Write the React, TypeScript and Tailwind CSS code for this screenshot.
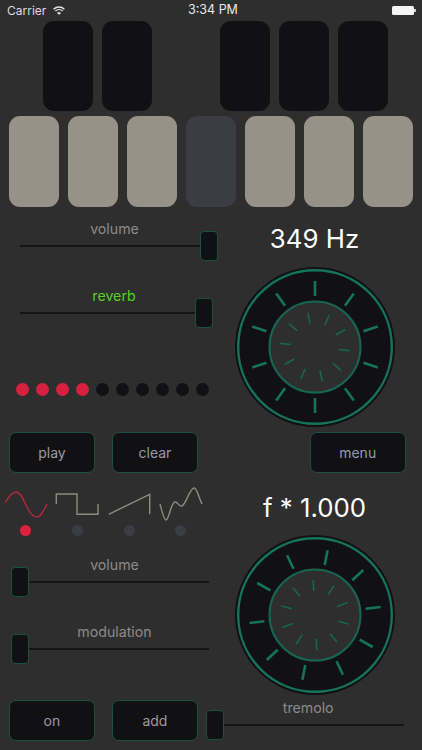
import React from "react";

const font = { fontFamily: "Inter, 'Liberation Sans', sans-serif" };

const Slider = ({ label, width, labelWidth, thumbAt, labelClass = "text-[#8b8b8b]" }: { label: string; width: string; labelWidth: string; thumbAt: "start" | "end"; labelClass?: string }) => (
  <div className={`relative flex items-center h-[30px] ${width}`}>
    {thumbAt === "start" && <Thumb />}
    <div className="flex-1 h-[2px] bg-[#151417]" />
    {thumbAt === "end" && <Thumb />}
    <div className={`absolute left-0 top-[-11px] text-center text-[14.2px] leading-[18px] ${labelWidth} ${labelClass}`}>{label}</div>
  </div>
);

const Thumb = () => (
  <div className="w-[18px] h-[30px] shrink-0 rounded-[4px] bg-[#111013] border border-[#1e5040]" />
);

const Btn = ({ label, className = "w-[86.5px]" }: { label: string; className?: string }) => (
  <div className={`h-[41px] flex items-center justify-center rounded-[7px] bg-[#111013] border-[1.5px] border-[#1e5040] text-[14px] text-[#9a9aaa] ${className}`}>
    {label}
  </div>
);

const Ticks = ({ rotate, from, to, width, color }: { rotate: number; from: number; to: number; width: number; color: string }) => (
  <>
    {Array.from({ length: 10 }).map((_, i) => (
      <line key={i} x1="80" y1={80 - from} x2="80" y2={80 - to} stroke={color} strokeWidth={width} transform={`rotate(${rotate + i * 36} 80 80)`} />
    ))}
  </>
);

const Knob = ({ outerRot, innerRot }: { outerRot: number; innerRot: number }) => (
  <svg width="160" height="160" viewBox="0 0 160 160" className="block">
    <circle cx="80" cy="80" r="80" fill="#111013" />
    <circle cx="80" cy="80" r="76.8" fill="none" stroke="#14755a" strokeWidth="2.4" />
    <Ticks rotate={outerRot} from={51} to={66} width={2.6} color="#14755a" />
    <circle cx="80" cy="80" r="45.5" fill="#2e2e2e" stroke="#176650" strokeWidth="2" />
    <Ticks rotate={innerRot} from={24} to={35} width={1.6} color="#176650" />
  </svg>
);

const waves = [
  { d: "M5 17C9 10 12 6 16 6C24 6 27 31 37 31C41 31 44 24 47 18", color: "#b0283f", dot: "bg-[#e0203f]" },
  { d: "M5.3 18V8H26V28.3H47V18", color: "#8e8b82", dot: "bg-[#3c3c44]" },
  { d: "M5.7 28.3L46.7 8.3V28.3", color: "#8e8b82", dot: "bg-[#3c3c44]" },
  { d: "M5 18C7 26 9 34 11 34C14 34 16 16 20 16C23 16 24 21 27 20C31 18 35 2 39 2C42 2 44 12 47 18", color: "#8e8b82", dot: "bg-[#3c3c44]" },
];

const dotColors = ["r", "r", "r", "r", "b", "b", "b", "b", "b", "b"];

export default function App() {
  return (
    <div className="w-[422px] h-[750px] overflow-hidden bg-[#2e2e2e]" style={font}>
      {/* status bar */}
      <div className="relative h-[21px] flex items-center pl-[7px] pr-[6px] text-[12px] text-[#dcdcdc]">
        <span>Carrier</span>
        <svg width="12" height="9" viewBox="0 0 12 9" className="ml-[6.5px]" fill="none" stroke="#e4e4e4">
          <path d="M.6 3.2C3.6.3 8.4.3 11.4 3.2" strokeWidth="1.4" />
          <path d="M2.4 5C4.4 3.1 7.6 3.1 9.6 5" strokeWidth="1.4" />
          <path d="M4.3 6.9C5.2 6 6.8 6 7.7 6.9L6 8.6Z" fill="#e4e4e4" strokeWidth=".5" />
        </svg>
        <span className="absolute left-[188px] text-[12.5px] text-[#e8e8e8]">3:34 PM</span>
        <div className="ml-auto flex items-center">
          <div className="w-[22px] h-[9px] bg-[#f4f4f4] rounded-[1.5px]" />
          <div className="w-[2px] h-[3px] bg-[#d0d0d0]" />
        </div>
      </div>

      {/* keys */}
      <div className="flex pl-[42.6px] h-[90px] gap-[8.5px]">
        {[0, 1].map((k) => <div key={k} className="w-[50.5px] rounded-[11px] bg-[#111013]" />)}
        <div className="w-[50.5px]" />
        {[2, 3, 4].map((k) => <div key={k} className="w-[50.5px] rounded-[11px] bg-[#111013]" />)}
      </div>
      <div className="flex pl-[8.6px] h-[91px] mt-[5px] gap-[8.5px]">
        {[0, 1, 2, 3, 4, 5, 6].map((k) => (
          <div key={k} className={`w-[50.5px] rounded-[11px] ${k === 3 ? "bg-[#3c3c44]" : "bg-[#969287]"}`} />
        ))}
      </div>

      {/* top controls */}
      <div className="flex h-[225px]">
        <div className="w-[234.5px] pl-[20px] pt-[24px]">
          <Slider label="volume" width="w-[198px]" labelWidth="w-[189px]" thumbAt="end" />
          <div className="mt-[37px]">
            <Slider label="reverb" width="w-[193px]" labelWidth="w-[188px]" thumbAt="end" labelClass="text-[#4fd61f]" />
          </div>
          <div className="mt-[55px] -ml-[4px] flex gap-[7px]">
            {dotColors.map((c, i) => (
              <div key={i} className={`w-[13px] h-[13px] rounded-full ${c === "r" ? "bg-[#d9213f]" : "bg-[#111013]"}`} />
            ))}
          </div>
        </div>
        <div className="w-[160px] flex flex-col items-center">
          <div className="h-[60px] pt-[14px] text-[25.8px] leading-[36px] text-white">349 Hz</div>
          <Knob outerRot={0} innerRot={-12} />
        </div>
      </div>

      {/* buttons */}
      <div className="flex pl-[8.7px] h-[40px]">
        <Btn label="play" />
        <Btn label="clear" className="w-[86.5px] ml-[16.5px]" />
        <Btn label="menu" className="w-[96px] ml-[111.5px]" />
      </div>

      {/* lower controls */}
      <div className="flex h-[228px]">
        <div className="w-[234.5px]">
          <div className="flex pt-[14px]">
            {waves.map((w, i) => (
              <div key={i} className="w-[51.67px] flex flex-col items-center">
                <svg width="52" height="36" viewBox="0 0 52 36" fill="none">
                  <path d={w.d} stroke={w.color} strokeWidth="1.4" />
                </svg>
                <div className={`mt-[2.5px] w-[11px] h-[11px] rounded-full ${w.dot}`} />
              </div>
            ))}
          </div>
          <div className="pl-[11px] mt-[31.5px]">
            <Slider label="volume" width="w-[198px]" labelWidth="w-[207px]" thumbAt="start" />
            <div className="mt-[37px]">
              <Slider label="modulation" width="w-[198px]" labelWidth="w-[207px]" thumbAt="start" />
            </div>
          </div>
        </div>
        <div className="w-[160px] flex flex-col items-center">
          <div className="h-[63px] pt-[18px] text-[25.8px] leading-[36px] text-white">f * 1.000</div>
          <Knob outerRot={11} innerRot={-3} />
        </div>
      </div>

      {/* bottom row */}
      <div className="flex pl-[8.7px]">
        <Btn label="on" />
        <Btn label="add" className="w-[86.5px] ml-[16.5px]" />
        <div className="ml-[8px] mt-[10px]">
          <Slider label="tremolo" width="w-[198px]" labelWidth="w-[204px]" thumbAt="start" />
        </div>
      </div>
    </div>
  );
}
